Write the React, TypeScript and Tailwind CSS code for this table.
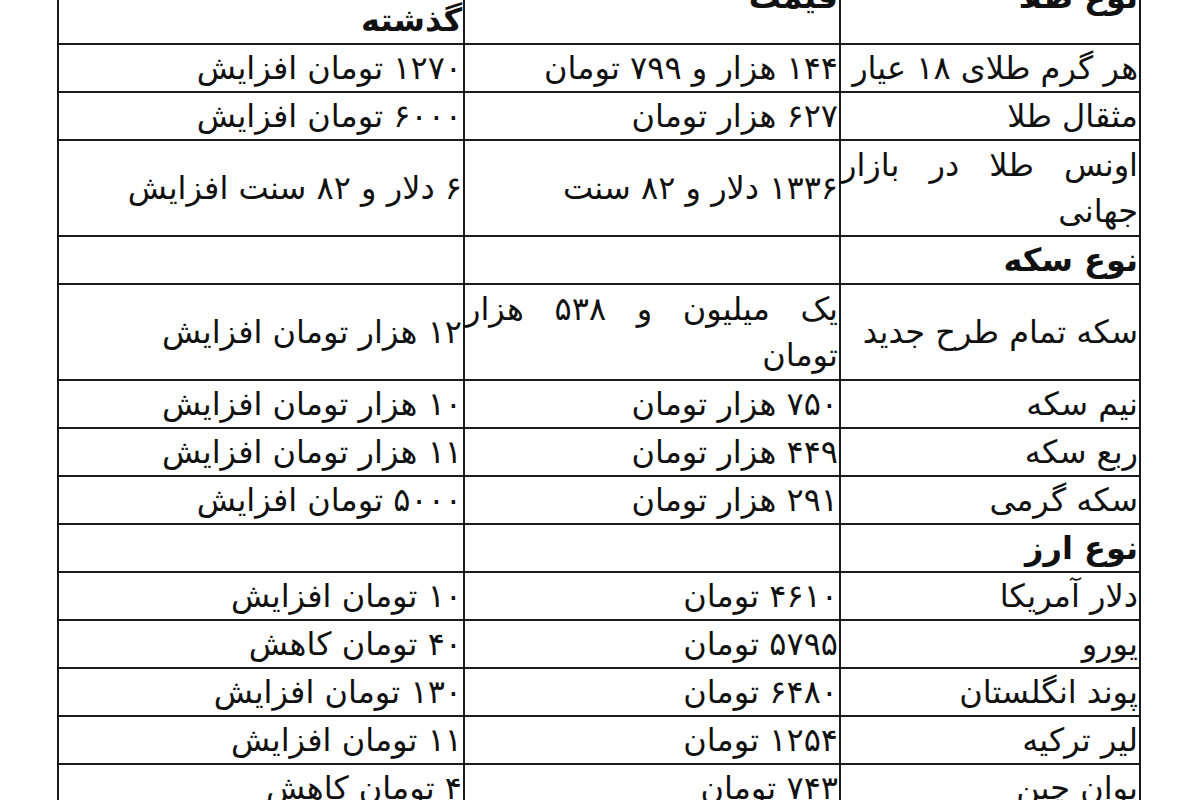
import type { ReactNode } from 'react'

type Row = {
  kind: string
  price?: string
  change?: string
  section?: boolean
  tall?: boolean
}

const ROWS: Row[] = [
  { kind: 'هر گرم طلای ۱۸ عیار', price: '۱۴۴ هزار و ۷۹۹ تومان', change: '۱۲۷۰ تومان افزایش' },
  { kind: 'مثقال طلا', price: '۶۲۷ هزار تومان', change: '۶۰۰۰ تومان افزایش' },
  {
    kind: 'اونس طلا در بازار جهانی',
    price: '۱۳۳۶ دلار و ۸۲ سنت',
    change: '۶ دلار و ۸۲ سنت افزایش',
    tall: true,
  },
  { kind: 'نوع سکه', section: true },
  {
    kind: 'سکه تمام طرح جدید',
    price: 'یک میلیون و ۵۳۸ هزار تومان',
    change: '۱۲ هزار تومان افزایش',
    tall: true,
  },
  { kind: 'نیم سکه', price: '۷۵۰ هزار تومان', change: '۱۰ هزار تومان افزایش' },
  { kind: 'ربع سکه', price: '۴۴۹ هزار تومان', change: '۱۱ هزار تومان افزایش' },
  { kind: 'سکه گرمی', price: '۲۹۱ هزار تومان', change: '۵۰۰۰ تومان افزایش' },
  { kind: 'نوع ارز', section: true },
  { kind: 'دلار آمریکا', price: '۴۶۱۰ تومان', change: '۱۰ تومان افزایش' },
  { kind: 'یورو', price: '۵۷۹۵ تومان', change: '۴۰ تومان کاهش' },
  { kind: 'پوند انگلستان', price: '۶۴۸۰ تومان', change: '۱۳۰ تومان افزایش' },
  { kind: 'لیر ترکیه', price: '۱۲۵۴ تومان', change: '۱۱ تومان افزایش' },
  { kind: 'یوان چین', price: '۷۴۳ تومان', change: '۴ تومان کاهش' },
]

function Cell({ children, bold }: { children?: ReactNode; bold?: boolean }) {
  return (
    <td
      className={
        'border-2 border-[#1a1a1a] p-0 pr-px text-justify align-middle leading-[46px] ' +
        (bold ? 'font-bold' : 'font-normal')
      }
    >
      {children}
    </td>
  )
}

export default function App() {
  return (
    <div
      dir="rtl"
      className="h-[800px] w-[1200px] overflow-hidden bg-white text-[32px] text-[#111]"
      style={{ fontFamily: '"DejaVu Sans", sans-serif' }}
    >
      {/* the header row starts above the visible area, only its bottom shows */}
      <table className="-mt-[51px] mr-[59px] w-[1082px] table-fixed border-collapse">
        <colgroup>
          <col className="w-[300px]" />
          <col className="w-[376px]" />
          <col className="w-[406px]" />
        </colgroup>
        <tbody>
          <tr className="h-[94px]">
            <Cell bold>نوع طلا</Cell>
            <Cell bold>قیمت</Cell>
            <Cell bold>تغییر قیمت نسبت به روز گذشته</Cell>
          </tr>
          {ROWS.map((row) => (
            <tr key={row.kind} className={row.tall ? 'h-[96px]' : 'h-[48px]'}>
              <Cell bold={row.section}>{row.kind}</Cell>
              <Cell>{row.price}</Cell>
              <Cell>{row.change}</Cell>
            </tr>
          ))}
        </tbody>
      </table>
    </div>
  )
}
